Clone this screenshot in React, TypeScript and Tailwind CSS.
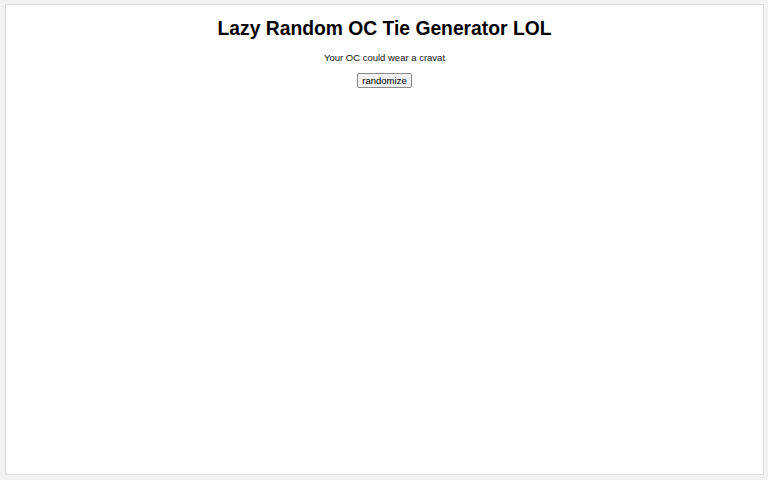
import React from "react";

export default function App() {
  return (
    <div className="w-[768px] h-[480px] bg-[#f2f2f2] p-[4px_4px_5px_5px] box-border" style={{ fontFamily: '"Liberation Sans", Arial, sans-serif' }}>
      <div className="h-full bg-white border border-[#dcdcdc] box-border flex flex-col items-center">
        <h1 className="mt-[13px] text-[19.3px] font-bold leading-[22px] text-black">Lazy Random OC Tie Generator LOL</h1>
        <p className="mt-[12px] text-[9.5px] leading-[11px] text-[#111]">Your OC could wear a cravat</p>
        <button className="mt-[10px] h-[15px] px-[4px] text-[9.5px] leading-[11px] text-black bg-[#f0f0f0] border border-[#8a8a8a] rounded-[2px]">randomize</button>
      </div>
    </div>
  );
}
